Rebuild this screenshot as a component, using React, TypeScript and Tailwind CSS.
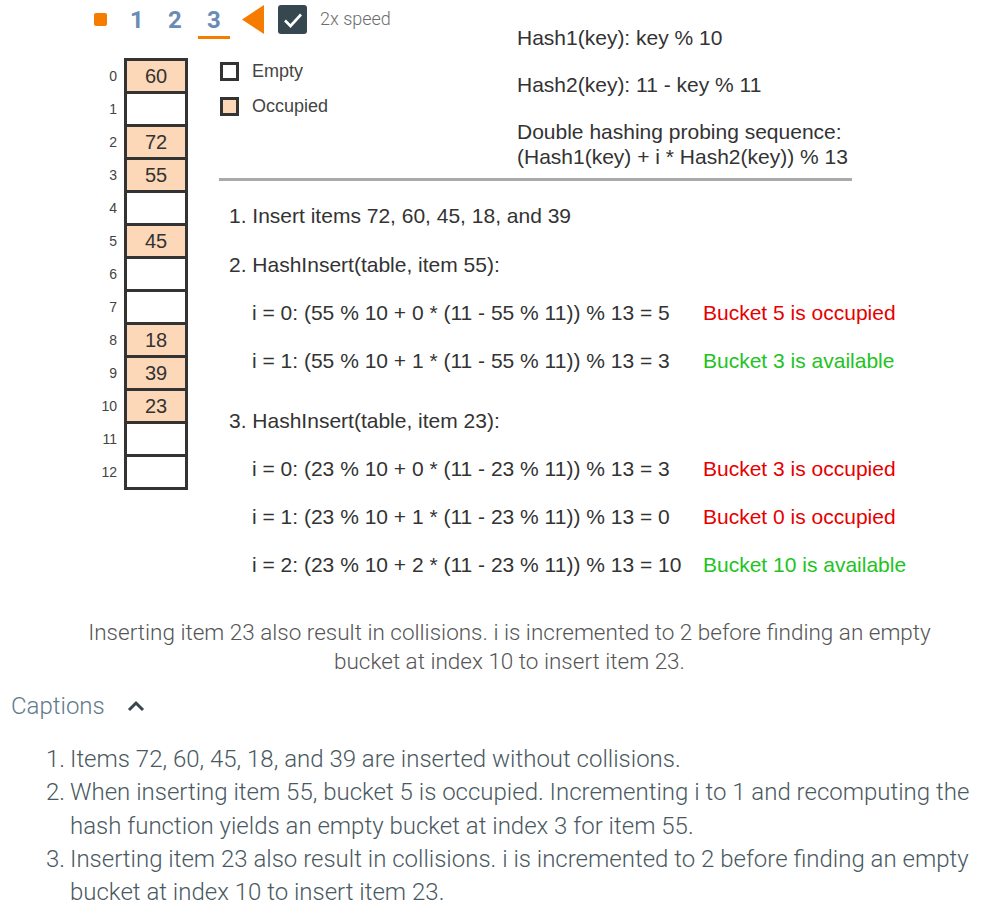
import React from 'react';

const cells: (number | null)[] = [60, null, 72, 55, null, 45, null, null, 18, 39, 23, null, null];

const captions = [
  'Items 72, 60, 45, 18, and 39 are inserted without collisions.',
  'When inserting item 55, bucket 5 is occupied. Incrementing i to 1 and recomputing the hash function yields an empty bucket at index 3 for item 55.',
  'Inserting item 23 also result in collisions. i is incremented to 2 before finding an empty bucket at index 10 to insert item 23.',
];

type Line = { x: number; y: number; text: string; color?: string };

// y values are the text centre, relative to the canvas top
const lines: Line[] = [
  { x: 517, y: -6, text: 'Hash1(key): key % 10' },
  { x: 517, y: 41, text: 'Hash2(key): 11 - key % 11' },
  { x: 517, y: 88, text: 'Double hashing probing sequence:' },
  { x: 517, y: 113, text: '(Hash1(key) + i * Hash2(key)) % 13' },
  { x: 229, y: 172, text: '1. Insert items 72, 60, 45, 18, and 39' },
  { x: 229, y: 221, text: '2. HashInsert(table, item 55):' },
  { x: 252, y: 269, text: 'i = 0: (55 % 10 + 0 * (11 - 55 % 11)) % 13 = 5' },
  { x: 703, y: 269, text: 'Bucket 5 is occupied', color: 'text-[#e60000]' },
  { x: 252, y: 317, text: 'i = 1: (55 % 10 + 1 * (11 - 55 % 11)) % 13 = 3' },
  { x: 703, y: 317, text: 'Bucket 3 is available', color: 'text-[#22c322]' },
  { x: 229, y: 377, text: '3. HashInsert(table, item 23):' },
  { x: 252, y: 425, text: 'i = 0: (23 % 10 + 0 * (11 - 23 % 11)) % 13 = 3' },
  { x: 703, y: 425, text: 'Bucket 3 is occupied', color: 'text-[#e60000]' },
  { x: 252, y: 473, text: 'i = 1: (23 % 10 + 1 * (11 - 23 % 11)) % 13 = 0' },
  { x: 703, y: 473, text: 'Bucket 0 is occupied', color: 'text-[#e60000]' },
  { x: 252, y: 521, text: 'i = 2: (23 % 10 + 2 * (11 - 23 % 11)) % 13 = 10' },
  { x: 703, y: 521, text: 'Bucket 10 is available', color: 'text-[#22c322]' },
];

const App = () => {
  return (
    <div className="w-[985px] bg-white font-['Roboto',sans-serif]">
      {/* animation controls */}
      <div className="flex h-[44px] items-start pl-[94px] pt-[5px]">
        <div className="mt-[8px] h-[13px] w-[13px] rounded-[2px] bg-[#f57c00]" />
        <div className="ml-[23px] flex h-[29px] items-center text-[24px] font-bold leading-none text-[#6a8bb3]">
          <span className="w-[38px]">1</span>
          <span className="w-[30px]">2</span>
          <span className="relative ml-[9px] w-[13px]">
            3
            <span className="absolute left-[-9px] top-[28px] h-[3px] w-[32px] bg-[#f57c00]" />
          </span>
        </div>
        <svg className="ml-[22px]" width="22" height="29" viewBox="0 0 22 29">
          <polygon points="22,0 22,29 0,14.5" fill="#f57c00" />
        </svg>
        <div className="ml-[14px] flex h-[29px] w-[29px] items-center justify-center rounded-[3px] bg-[#37474f]">
          <svg width="20" height="16" viewBox="0 0 20 16">
            <path d="M2 8.5 L7.5 14 L18 2.5" fill="none" stroke="white" strokeWidth="2.6" />
          </svg>
        </div>
        <span className="ml-[13px] mt-[1px] text-[18px] font-light leading-[26px] text-[#6d6d6d]">2x speed</span>
      </div>

      {/* canvas */}
      <div className="relative h-[574px] font-['Liberation_Sans',Arial,sans-serif] text-[#333]">
        <div className="absolute left-[93px] top-[14px] flex flex-col">
          {cells.map((v, i) => (
            <div key={i} className={`flex items-center ${i > 0 ? '-mt-[3px]' : ''}`}>
              <span className="w-[25px] pr-[1px] text-right text-[14px] leading-[16px] text-[#444]">{i}</span>
              <div
                className={`ml-[6px] flex h-[36px] w-[64px] items-center justify-center border-[3px] border-[#333] text-[20px] ${
                  v === null ? 'bg-white' : 'bg-[#fcd8b8]'
                }`}
              >
                {v}
              </div>
            </div>
          ))}
        </div>

        <div className="absolute left-[220px] top-[18px] flex flex-col gap-[16px]">
          <div className="flex items-center">
            <div className="h-[19px] w-[19px] border-[3px] border-[#333] bg-white" />
            <span className="ml-[13px] text-[18px] leading-[19px] text-[#444]">Empty</span>
          </div>
          <div className="flex items-center">
            <div className="h-[19px] w-[19px] border-[3px] border-[#333] bg-[#fcd8b8]" />
            <span className="ml-[13px] text-[18px] leading-[19px] text-[#444]">Occupied</span>
          </div>
        </div>

        <div className="absolute left-[219px] top-[134px] h-[3px] w-[633px] bg-[#aaaaaa]" />

        {lines.map((l, i) => (
          <span
            key={i}
            className={`absolute whitespace-nowrap text-[21px] leading-[24px] ${l.color ?? 'text-[#333]'}`}
            style={{ left: l.x, top: l.y - 12 }}
          >
            {l.text}
          </span>
        ))}
      </div>

      {/* current step caption */}
      <p className="mx-auto w-[880px] pl-[34px] text-center text-[22.5px] font-light leading-[29px] text-[#555]">
        Inserting item 23 also result in collisions. i is incremented to 2 before finding an empty bucket at index 10 to
        insert item 23.
      </p>

      <div className="mt-[15px] flex items-center pl-[11px]">
        <span className="text-[24px] font-light leading-[30px] text-[#5f7a8a]">Captions</span>
        <svg className="ml-[22px]" width="18" height="12" viewBox="0 0 18 12">
          <path d="M2 10 L9 3 L16 10" fill="none" stroke="#37474f" strokeWidth="3" />
        </svg>
      </div>

      <ol className="mt-[22px] pl-[46px] pr-[8px] text-[24px] font-light leading-[33.3px] text-[#4a5961]">
        {captions.map((c, i) => (
          <li key={i} className="flex">
            <span className="w-[24px] shrink-0">{i + 1}.</span>
            <span>{c}</span>
          </li>
        ))}
      </ol>
    </div>
  );
};

export default App;
